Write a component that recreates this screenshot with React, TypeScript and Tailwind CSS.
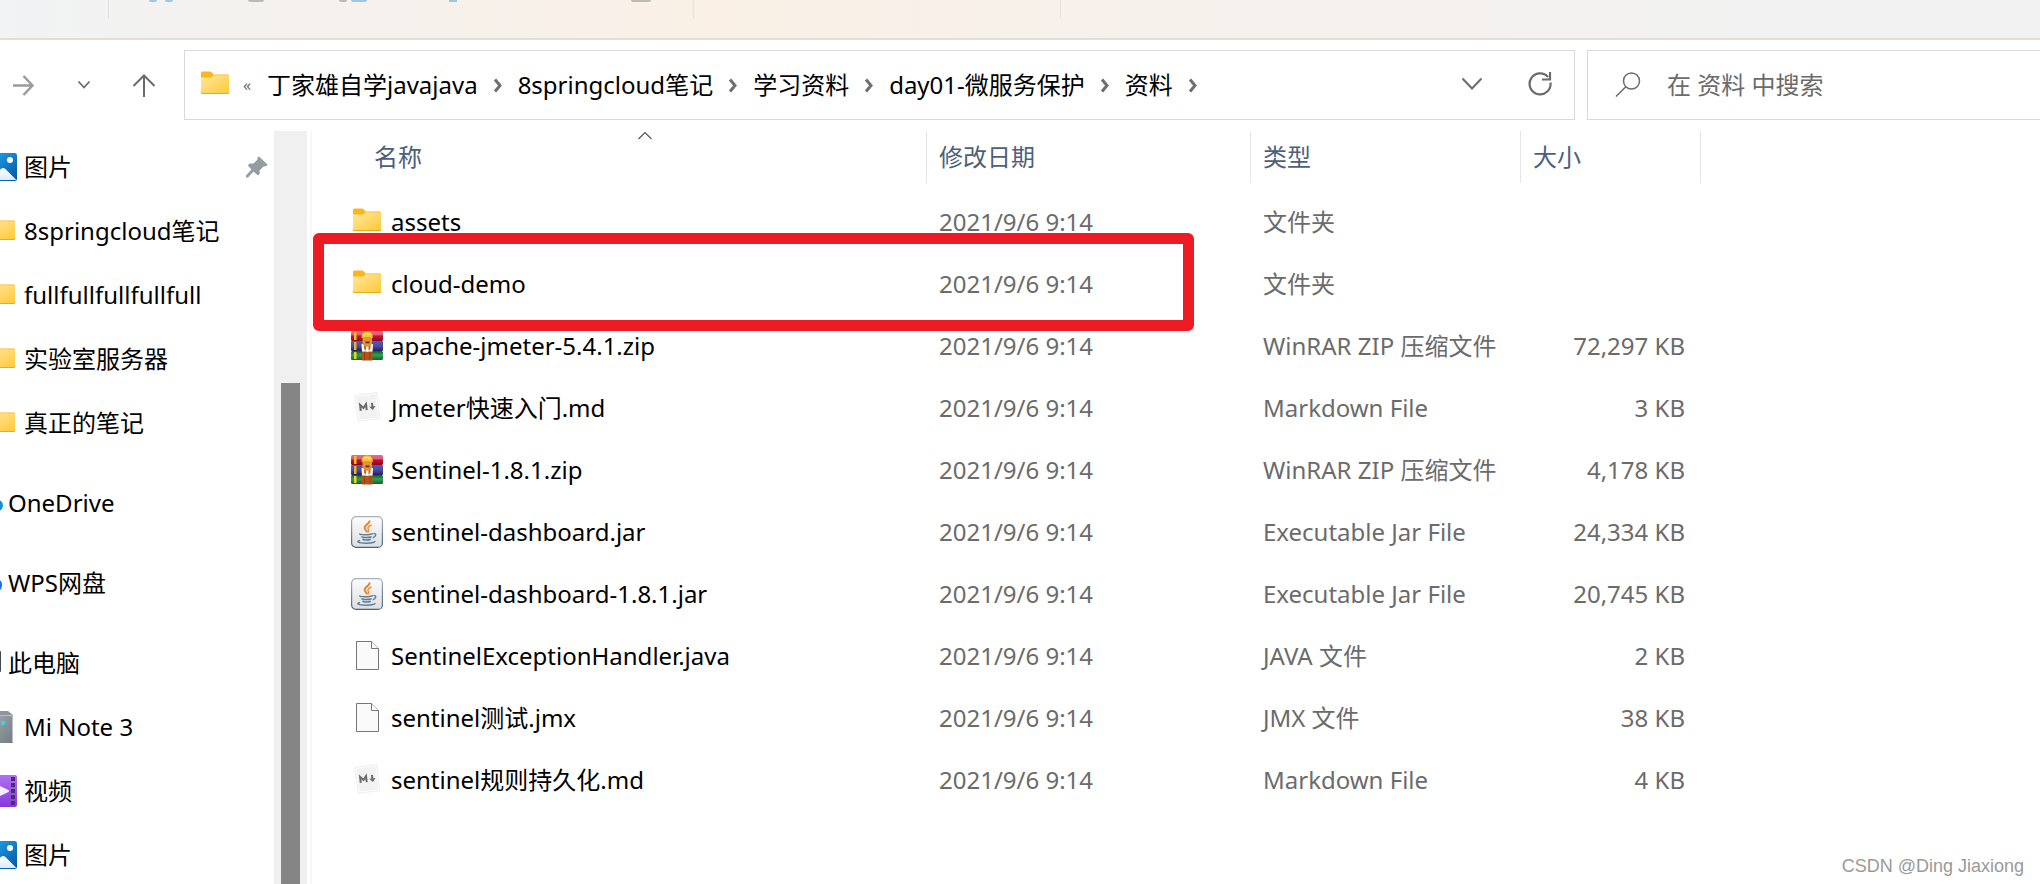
import type { ReactNode } from 'react';

type FileKind = 'folder' | 'zip' | 'md' | 'jar' | 'file';

interface FileEntry {
  name: string;
  date: string;
  type: string;
  size: string;
  kind: FileKind;
}

const files: FileEntry[] = [
  { name: 'assets', date: '2021/9/6 9:14', type: '文件夹', size: '', kind: 'folder' },
  { name: 'cloud-demo', date: '2021/9/6 9:14', type: '文件夹', size: '', kind: 'folder' },
  { name: 'apache-jmeter-5.4.1.zip', date: '2021/9/6 9:14', type: 'WinRAR ZIP 压缩文件', size: '72,297 KB', kind: 'zip' },
  { name: 'Jmeter快速入门.md', date: '2021/9/6 9:14', type: 'Markdown File', size: '3 KB', kind: 'md' },
  { name: 'Sentinel-1.8.1.zip', date: '2021/9/6 9:14', type: 'WinRAR ZIP 压缩文件', size: '4,178 KB', kind: 'zip' },
  { name: 'sentinel-dashboard.jar', date: '2021/9/6 9:14', type: 'Executable Jar File', size: '24,334 KB', kind: 'jar' },
  { name: 'sentinel-dashboard-1.8.1.jar', date: '2021/9/6 9:14', type: 'Executable Jar File', size: '20,745 KB', kind: 'jar' },
  { name: 'SentinelExceptionHandler.java', date: '2021/9/6 9:14', type: 'JAVA 文件', size: '2 KB', kind: 'file' },
  { name: 'sentinel测试.jmx', date: '2021/9/6 9:14', type: 'JMX 文件', size: '38 KB', kind: 'file' },
  { name: 'sentinel规则持久化.md', date: '2021/9/6 9:14', type: 'Markdown File', size: '4 KB', kind: 'md' },
];

const crumbs = ['丁家雄自学javajava', '8springcloud笔记', '学习资料', 'day01-微服务保护', '资料'];

function FolderIcon() {
  return (
    <svg className="size-8 shrink-0" viewBox="0 0 32 32" aria-hidden="true">
      <defs>
        <linearGradient id="folderFace" x1="0" y1="0" x2="1" y2="1">
          <stop offset="0" stopColor="#ffe8a0" />
          <stop offset="1" stopColor="#ffc935" />
        </linearGradient>
      </defs>
      <path d="M2 4q0-1.500 1.500-1.500H11q1 0 1.700.7L14.500 5.500H29q1 0 1 1V11H2z" fill="#fbb61a" />
      <path d="M2 8.500h9.500q1 0 1.700-.7l1.500-1.500H30V23.500q0 1-1 1H3q-1 0-1-1z" fill="url(#folderFace)" />
      <path d="M2 23.500q0 1 1 1h26q1 0 1-1" fill="none" stroke="#eba921" strokeWidth="1" />
    </svg>
  );
}

function ZipIcon() {
  return (
    <svg className="size-8 shrink-0" viewBox="0 0 32 32" aria-hidden="true">
      <defs>
        <linearGradient id="bookRed" x1="0" y1="0" x2="0" y2="1">
          <stop offset="0" stopColor="#e8668a" />
          <stop offset=".35" stopColor="#e05c7c" />
          <stop offset=".5" stopColor="#c81232" />
          <stop offset="1" stopColor="#86081f" />
        </linearGradient>
        <linearGradient id="bookBlue" x1="0" y1="0" x2="0" y2="1">
          <stop offset="0" stopColor="#5a56b4" />
          <stop offset=".5" stopColor="#4a4ca8" />
          <stop offset="1" stopColor="#211d5c" />
        </linearGradient>
        <linearGradient id="bookGreen" x1="0" y1="0" x2="0" y2="1">
          <stop offset="0" stopColor="#0d5c26" />
          <stop offset=".45" stopColor="#2fa354" />
          <stop offset="1" stopColor="#0c6428" />
        </linearGradient>
      </defs>
      <rect x="0" y="1" width="32" height="10" rx="1.500" fill="url(#bookRed)" />
      <rect x="0" y="11" width="32" height="10" rx="1" fill="url(#bookBlue)" />
      <rect x="0" y="21" width="32" height="9" rx="1.500" fill="url(#bookGreen)" />
      <rect x="3" y="2" width="2.500" height="8" fill="#f2c21b" />
      <rect x="3" y="12" width="2.500" height="8" fill="#e4b81d" />
      <rect x="3" y="22" width="2.500" height="7" fill="#f2d21b" />
      <rect x="11" y="21" width="10.500" height="9.500" fill="#b4541c" />
      <path d="M13.500 22v8M19 22v8" stroke="#8a3a0e" strokeWidth=".8" />
      <path d="M10.500 14H22l-.5 7.500H11z" fill="#fff" />
      <path d="M13 14.500h6.500v4l-1.500 2h-3.500L13 18.500z" fill="#c4691f" />
      <path d="M15 16.500h2.500v5H15z" fill="#fff" />
      <path d="M11.500 6h9.500v8l-2 2h-5.500l-2-2z" fill="#e5922f" />
      <path d="M14.500 11.500h4v1.800h-4z" fill="#5a3210" />
      <path d="M10.500 8q0-6.700 5.700-6.700T21.800 8q-2.800-1-5.600-1t-5.700 1z" fill="#f7c52e" />
      <path d="M13 4.500q3-2 6 0" fill="none" stroke="#fff09a" strokeWidth="1.200" />
    </svg>
  );
}

function MarkdownIcon() {
  return (
    <svg className="size-8 shrink-0" viewBox="0 0 32 32" aria-hidden="true">
      <g transform="rotate(-7 16 16)">
        <rect x="5.500" y="2" width="22" height="26" fill="#fdfdfd" stroke="#e9e9e9" strokeWidth=".8" />
        <rect x="7" y="3.500" width="19" height="23" fill="#f2f2f2" />
        <path d="M9.500 18v-6l3 3.500 3-3.500v6" fill="none" stroke="#6b6b6b" strokeWidth="2" />
        <path d="M21.500 11.500v5" stroke="#6b6b6b" strokeWidth="2" />
        <path d="M18.300 15h6.400L21.500 18.800z" fill="#6b6b6b" />
      </g>
    </svg>
  );
}

function JarIcon() {
  return (
    <svg className="size-8 shrink-0" viewBox="0 0 32 32" aria-hidden="true">
      <defs>
        <linearGradient id="jarFace" x1="0" y1="0" x2="0" y2="1">
          <stop offset="0" stopColor="#fdfdfd" />
          <stop offset="1" stopColor="#dedede" />
        </linearGradient>
        <linearGradient id="jarEdge" x1="0" y1="0" x2="0" y2="1">
          <stop offset="0" stopColor="#a3b4c0" />
          <stop offset="1" stopColor="#45647a" />
        </linearGradient>
      </defs>
      <rect x=".6" y=".6" width="30.800" height="30.800" rx="4.500" fill="url(#jarFace)" stroke="url(#jarEdge)" strokeWidth="1.200" />
      <path d="M18.500 4.500c1 3-5.500 4.500-4.800 7.600.3 1.600 1.800 2.600 2.300 4.200" fill="none" stroke="#ee7a1b" strokeWidth="1.800" />
      <path d="M20.500 9c-3 1-4.300 2.600-3.300 4.200.8 1.300.6 2.200-.5 3.300" fill="none" stroke="#f08c35" strokeWidth="1.500" />
      <path d="M9 17.500c-1 1.200 4 1.400 7.500 1.200 2.500-.1 4.500-.5 5.500-1" fill="none" stroke="#5c7f9c" strokeWidth="1.500" />
      <path d="M22.500 17.600c3.300-.8 3 2.800-.8 4.200" fill="none" stroke="#5c7f9c" strokeWidth="1.400" />
      <path d="M10.500 20.500c.5 1.300 7 1.300 10 .2M11.500 23c1 1.300 6 1.300 8.300.2" fill="none" stroke="#5c7f9c" strokeWidth="1.600" />
      <path d="M9 24.500c-4 .9-2.500 2.700 6.500 2.700 6 0 9-1.200 8.500-2.200" fill="none" stroke="#5c7f9c" strokeWidth="1.400" />
    </svg>
  );
}

function PlainFileIcon() {
  return (
    <svg className="size-8 shrink-0" viewBox="0 0 32 32" aria-hidden="true">
      <path d="M5.500 1.500h15l7 7v21h-22z" fill="#fafafa" stroke="#767676" />
      <path d="M20.500 1.500v7h7" fill="#fff" stroke="#767676" />
    </svg>
  );
}

const kindIcons: Record<FileKind, () => ReactNode> = {
  folder: FolderIcon,
  zip: ZipIcon,
  md: MarkdownIcon,
  jar: JarIcon,
  file: PlainFileIcon,
};

function PictureIcon() {
  return (
    <svg className="size-8 shrink-0" viewBox="0 0 32 32" aria-hidden="true">
      <defs>
        <linearGradient id="photoSky" x1="0" y1="0" x2="1" y2="1">
          <stop offset="0" stopColor="#25a8ec" />
          <stop offset="1" stopColor="#0357a8" />
        </linearGradient>
        <linearGradient id="photoHill" x1="0" y1="0" x2="0" y2="1">
          <stop offset="0" stopColor="#fff" />
          <stop offset="1" stopColor="#dcebfa" />
        </linearGradient>
      </defs>
      <rect x="0" y="2" width="32" height="28" rx="2.500" fill="url(#photoSky)" />
      <path d="M2.500 29 16.500 17.500q1.700-1.200 3.400 0L31 28.500q-.5.500-1.500.5z" fill="url(#photoHill)" />
      <circle cx="25" cy="9" r="3" fill="#fff" />
    </svg>
  );
}

function VideoIcon() {
  return (
    <svg className="size-8 shrink-0" viewBox="0 0 32 32" aria-hidden="true">
      <defs>
        <linearGradient id="videoFace" x1="0" y1="0" x2="0" y2="1">
          <stop offset="0" stopColor="#b072f0" />
          <stop offset="1" stopColor="#8438dc" />
        </linearGradient>
      </defs>
      <rect x="0" y="0" width="32" height="32" rx="2" fill="url(#videoFace)" />
      <path d="M26 2h4v4h-4zM26 8h4v4h-4zM26 14h4v4h-4zM26 20h4v4h-4zM26 26h4v4h-4z" fill="#4b2a78" />
      <path d="M10 8.500 23.500 15q1 1 0 2L10 23.500z" fill="#f3eefa" />
    </svg>
  );
}

function DeviceIcon() {
  return (
    <svg className="size-8 shrink-0" viewBox="0 0 32 32" aria-hidden="true">
      <defs>
        <linearGradient id="deviceFace" x1="0" y1="0" x2="1" y2="1">
          <stop offset="0" stopColor="#a3abb0" />
          <stop offset="1" stopColor="#747d83" />
        </linearGradient>
      </defs>
      <path d="M4 4 8 0h15l5 4z" fill="#8e979d" />
      <rect x="4" y="4" width="24" height="28" fill="url(#deviceFace)" />
      <path d="M4 4.500h23.500V31.500" fill="none" stroke="#b9c0c4" />
      <circle cx="18" cy="12" r="2.200" fill="#35d6e6" />
    </svg>
  );
}

function OneDriveIcon() {
  return (
    <svg className="size-8 shrink-0" viewBox="0 0 32 32" aria-hidden="true">
      <path d="M6 25a6 6 0 0 1 0-12 9 9 0 0 1 16-1 6.500 6.500 0 0 1 4 13z" fill="#1490df" />
      <circle cx="26.500" cy="18.500" r="5.500" fill="#1490df" />
    </svg>
  );
}

function WpsIcon() {
  return (
    <svg className="size-8 shrink-0" viewBox="0 0 32 32" aria-hidden="true">
      <path d="M6 25a6 6 0 0 1 0-12 9 9 0 0 1 16-1 6.500 6.500 0 0 1 4 13z" fill="#1b6fe8" />
      <circle cx="25.500" cy="17.500" r="5.500" fill="#1b6fe8" />
    </svg>
  );
}

function ComputerIcon() {
  return (
    <svg className="size-8 shrink-0" viewBox="0 0 32 32" aria-hidden="true">
      <rect x="0" y="4" width="30" height="21" rx="1" fill="#45494c" />
      <rect x="2" y="6" width="26" height="17" fill="#2ba5e0" />
    </svg>
  );
}

interface Place {
  label: string;
  icon: () => ReactNode;
  root?: boolean;
  spaced?: boolean;
  pinned?: boolean;
}

const places: Place[] = [
  { label: '图片', icon: PictureIcon, pinned: true },
  { label: '8springcloud笔记', icon: FolderIcon },
  { label: 'fullfullfullfullfull', icon: FolderIcon },
  { label: '实验室服务器', icon: FolderIcon },
  { label: '真正的笔记', icon: FolderIcon },
  { label: 'OneDrive', icon: OneDriveIcon, root: true, spaced: true },
  { label: 'WPS网盘', icon: WpsIcon, root: true, spaced: true },
  { label: '此电脑', icon: ComputerIcon, root: true, spaced: true },
  { label: 'Mi Note 3', icon: DeviceIcon },
  { label: '视频', icon: VideoIcon },
  { label: '图片', icon: PictureIcon },
];

function Ribbon() {
  return (
    <div className="flex h-10 shrink-0 items-start border-b-2 border-[#e3ded6] bg-linear-to-r from-[#f1f3f4] via-[#faf0e6] via-35% to-[#f2f2f2] to-85%">
      <div className="flex w-[109px] justify-end">
        <span className="h-[18px] w-px bg-[#e0e0dc]" />
      </div>
      <div className="flex w-[585px]">
        <span className="ml-10 h-[2px] w-2 rounded-b-full bg-[#9cc8e8]" />
        <span className="ml-2 h-[2px] w-2 rounded-b-full bg-[#9cc8e8]" />
        <span className="ml-[75px] h-[2px] w-4 rounded-b-full bg-[#bdbab3]" />
        <span className="ml-[75px] h-[2px] w-2 rounded-b-full bg-[#bdbab3]" />
        <span className="ml-1 h-[2px] w-4 rounded-b-full bg-[#9cc8e8]" />
        <span className="ml-[82px] h-[2px] w-2 bg-[#9cc8e8]" />
        <span className="ml-[174px] h-[2px] w-5 rounded-b-full bg-[#bdbab3]" />
        <span className="ml-auto h-[18px] w-px bg-[#e8dfd5]" />
      </div>
      <div className="flex w-[367px] justify-end">
        <span className="h-[18px] w-px bg-[#e8dfd5]" />
      </div>
    </div>
  );
}

function CrumbArrow() {
  return (
    <svg className="h-4 w-10 shrink-0" viewBox="0 0 40 16" aria-hidden="true">
      <path d="M17 2.500l5 6-5 6" fill="none" stroke="#6e6e6e" strokeWidth="3" />
    </svg>
  );
}

function AddressRow() {
  return (
    <div className="flex h-[91px] shrink-0 gap-3 pt-[10px]">
      <div className="flex h-[70px] w-[172px] items-center">
        <button type="button" aria-label="前进" className="ml-3 flex size-6 items-center">
          <svg className="size-6" viewBox="0 0 24 24" fill="none" stroke="#9b9b9b" strokeWidth="2.500">
            <path d="M1 12.500h19M11.500 3l9 9.500-9 9.500" />
          </svg>
        </button>
        <button type="button" aria-label="最近浏览的位置" className="ml-[41px] flex size-4 items-center">
          <svg className="size-4" viewBox="0 0 16 16" fill="none" stroke="#6b6b6b" strokeWidth="1.800">
            <path d="M1.500 4.500 7 10.500l5.500-6" />
          </svg>
        </button>
        <button type="button" aria-label="上移" className="ml-[38px] flex size-6 items-center">
          <svg className="size-6" viewBox="0 0 24 24" fill="none" stroke="#6b6b6b" strokeWidth="2">
            <path d="M13 24V2M2.500 13 13 2.500 23.500 13" />
          </svg>
        </button>
      </div>
      <div className="flex h-[70px] min-w-0 flex-1 items-center border border-[#d9d9d9] pl-[14px]">
        <FolderIcon />
        <span className="ml-[12px] w-6 text-base leading-none text-[#6b6b6b]">«</span>
        <nav aria-label="地址" className="flex flex-1 items-center whitespace-nowrap">
          {crumbs.map((crumb) => (
            <span key={crumb} className="flex items-center">
              <button type="button" className="h-9 leading-9">{crumb}</button>
              <CrumbArrow />
            </span>
          ))}
        </nav>
        <button type="button" aria-label="展开地址" className="mr-[42px] flex items-center">
          <svg className="size-6" viewBox="0 0 24 24" fill="none" stroke="#6b6b6b" strokeWidth="2">
            <path d="M2.500 5.500 12 15.500l9.500-10" />
          </svg>
        </button>
        <button type="button" aria-label="刷新" className="mr-[20px] flex items-center">
          <svg className="size-7" viewBox="0 0 28 28" fill="none" stroke="#6b6b6b" strokeWidth="2.200">
            <path d="M24.500 11.500a10.500 10.500 0 1 1-2.500-5.500" />
            <path d="M24 1v7.500h-8" />
          </svg>
        </button>
      </div>
      <div className="flex h-[70px] w-[453px] shrink-0 items-center border border-r-0 border-[#d9d9d9] pl-[27px]">
        <svg className="size-7 shrink-0" viewBox="0 0 28 28" fill="none" stroke="#6b6b6b" strokeWidth="1.500" aria-hidden="true">
          <circle cx="16.500" cy="10" r="8" />
          <path d="M10.800 15.700 1 25.500" />
        </svg>
        <input
          type="search"
          aria-label="搜索"
          placeholder="在 资料 中搜索"
          className="ml-6 h-9 min-w-0 flex-1 bg-transparent outline-none placeholder:text-[#6b6b6b]"
        />
      </div>
    </div>
  );
}

function Sidebar() {
  return (
    <nav aria-label="导航窗格" className="w-[274px] shrink-0 overflow-hidden pt-1">
      <ul>
        {places.map((place, index) => (
          <li key={index} className={place.spaced ? 'pt-4' : ''}>
            <a
              href="#"
              className={
                place.root
                  ? 'flex h-16 -ml-[29px] items-center gap-[5px] whitespace-nowrap'
                  : 'flex h-16 -ml-[15px] items-center gap-[7px] whitespace-nowrap'
              }
            >
              <place.icon />
              <span>{place.label}</span>
              {place.pinned && (
                <svg className="mr-[5px] ml-auto size-6" viewBox="0 0 24 24" fill="#929ca3" aria-hidden="true">
                  <path d="M14 1.500 22.500 9.500 21.500 11 18.500 11.500 14.500 15.500 14.800 18.500 13 20.500 8.500 16.500 3 22.500H1V20.500L6.500 14.500 2.800 10.500 4.500 8.500 8.500 8.500 12.500 4.500 12.500 2.500z" />
                </svg>
              )}
            </a>
          </li>
        ))}
      </ul>
    </nav>
  );
}

function FileTable() {
  return (
    <table className="w-[1389px] table-fixed border-collapse whitespace-nowrap">
      <colgroup>
        <col />
        <col className="w-[324px]" />
        <col className="w-[270px]" />
        <col className="w-[180px]" />
      </colgroup>
      <thead>
        <tr className="h-[60px] text-left align-top text-[#4c607a]">
          <th scope="col" className="relative p-0 font-normal">
            <svg className="absolute top-0 left-[325px] h-[9px] w-4" viewBox="0 0 16 9" fill="none" stroke="#555" strokeWidth="1.200" aria-hidden="true">
              <path d="M1.500 8 8 1.500 14.500 8" />
            </svg>
            <div className="flex h-[52px] items-center border-r border-[#e5e5e5] pl-[62px]">名称</div>
          </th>
          <th scope="col" className="p-0 font-normal">
            <div className="flex h-[52px] items-center border-r border-[#e5e5e5] pl-3">修改日期</div>
          </th>
          <th scope="col" className="p-0 font-normal">
            <div className="flex h-[52px] items-center border-r border-[#e5e5e5] pl-3">类型</div>
          </th>
          <th scope="col" className="p-0 font-normal">
            <div className="flex h-[52px] items-center border-r border-[#e5e5e5] pl-3">大小</div>
          </th>
        </tr>
      </thead>
      <tbody>
        {files.map((file) => {
          const Icon = kindIcons[file.kind];
          return (
            <tr key={file.name} className="h-[62px] text-[#6b6b6b]">
              <td className="p-0">
                <div className="flex items-center gap-2 pl-[39px] text-black">
                  <Icon />
                  <span>{file.name}</span>
                </div>
              </td>
              <td className="p-0 pl-3">{file.date}</td>
              <td className="p-0 pl-3">{file.type}</td>
              <td className="p-0 pr-4 text-right">{file.size}</td>
            </tr>
          );
        })}
      </tbody>
    </table>
  );
}

export default function App() {
  return (
    <div className="flex h-screen flex-col overflow-hidden bg-white font-['Noto_Sans','Noto_Sans_CJK_SC',sans-serif] text-2xl leading-9 text-black">
      <Ribbon />
      <AddressRow />
      <div className="flex min-h-0 flex-1">
        <Sidebar />
        <div className="flex w-[33px] shrink-0 flex-col items-center bg-[#f0f0f0] pt-[252px]">
          <div className="w-[19px] flex-1 bg-[#858585]" />
        </div>
        <main className="relative ml-[3px] flex-1 overflow-hidden border-l-2 border-[#f7f7f7]">
          <FileTable />
          <div className="pointer-events-none absolute top-[102px] left-px h-[98px] w-[881px] rounded-md border-[11px] border-[#ed1c24]" />
          <p className="absolute right-4 bottom-0 font-['Liberation_Sans',sans-serif] text-lg leading-9 text-[#9a9a9a]">CSDN @Ding Jiaxiong</p>
        </main>
      </div>
    </div>
  );
}
